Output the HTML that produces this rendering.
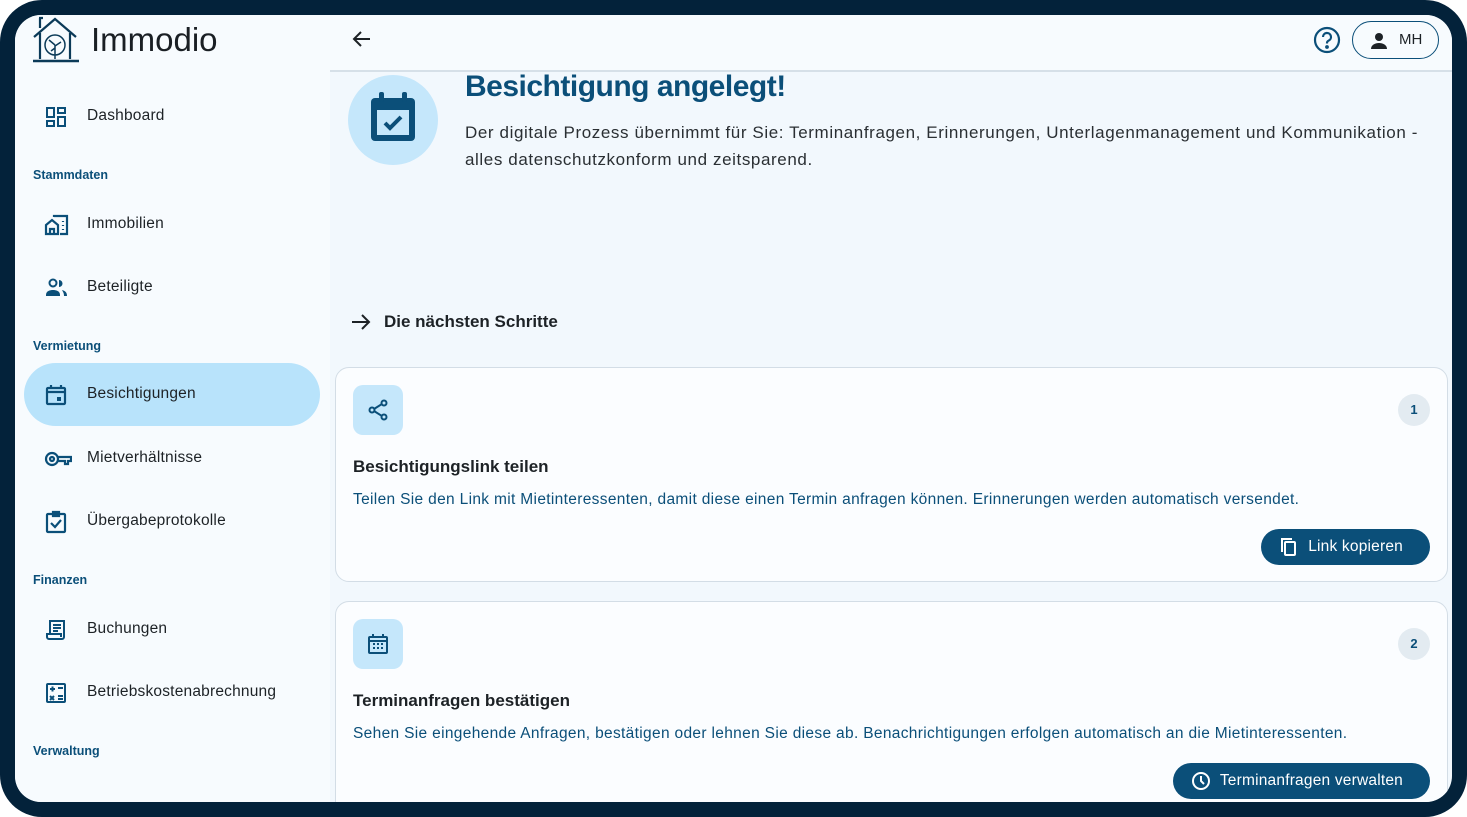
<!DOCTYPE html>
<html><head><meta charset="utf-8"><style>
*{box-sizing:border-box;margin:0;padding:0}
html,body{width:1467px;height:817px;overflow:hidden;background:#fff;font-family:"Liberation Sans",sans-serif}
.frame{position:absolute;left:0;top:0;width:1467px;height:817px;background:#03223a;border-radius:42px}
.screen{position:absolute;left:15px;top:15px;width:1437px;height:787px;border-radius:26px;overflow:hidden;background:#f2f8fd}
.side{position:absolute;left:0;top:0;width:315px;height:787px;background:#f7fbfe}
.logo{position:absolute;left:17px;top:0}
.brand{position:absolute;left:76px;top:6px;font-size:33px;color:#1a1f24}
.item{position:absolute;left:9px;width:296px;height:63px;border-radius:32px;display:flex;align-items:center;font-size:15.5px;color:#1d2226;letter-spacing:0.2px}
.item svg{position:absolute;left:20px}
.item span{position:absolute;left:63px;top:22px}
.item.act{background:#b8e3fb}
.sec{position:absolute;left:18px;font-size:12.5px;font-weight:bold;color:#0b4f79}
.top{position:absolute;left:315px;top:0;width:1122px;height:57px;background:#f7fbfe;border-bottom:2px solid #d6e0e8}
.pill{position:absolute;left:1337px;top:6px;width:87px;height:38px;border:1.5px solid #0b4f79;border-radius:19px;font-size:15px;color:#1d2226}
.circle{position:absolute;left:333px;top:60px;width:90px;height:90px;border-radius:50%;background:#c5e7fb}
h1{position:absolute;left:450px;top:55px;font-size:30px;color:#0b4f79;font-weight:bold;letter-spacing:-0.5px}
.lead{position:absolute;left:450px;top:104px;width:965px;font-size:17px;line-height:27px;color:#2a2f33;letter-spacing:0.6px}
.steps{position:absolute;left:369px;top:297px;font-size:17px;font-weight:bold;color:#1d2226}
.card{position:absolute;left:320px;width:1113px;border:1.5px solid #d3dde6;border-radius:14px;background:#fbfdff}
.ic{position:absolute;left:17px;top:17px;width:50px;height:50px;border-radius:10px;background:#c5e7fb;display:flex;align-items:center;justify-content:center}
.num{position:absolute;right:17px;top:26px;width:32px;height:32px;border-radius:50%;background:#e3ebf1;font-size:13px;font-weight:bold;color:#0b4f79;text-align:center;line-height:32px}
.ct{position:absolute;left:17px;top:89px;font-size:17px;font-weight:bold;color:#1d2226}
.cd{position:absolute;left:17px;top:123px;font-size:15.5px;color:#0b4f79;letter-spacing:0.33px}
.btn{position:absolute;right:17px;height:36px;border-radius:18px;background:#0b4f79;color:#fff;font-size:15.5px;display:flex;align-items:center;padding:0 27px 0 18px;gap:9px;letter-spacing:0.2px}
</style></head><body>
<div class="frame"></div>
<div class="screen">
<div class="side">
<svg class="logo" width="48" height="48" viewBox="0 0 48 48" fill="none" stroke="#0b3a58" stroke-width="2.2"><path d="M2 22 L23 4 L44 22"/><path d="M8 3v10"/><path d="M7 3h4"/><path d="M8 18v26M38 18v26"/><path d="M1 46h46" stroke-width="2.5"/><circle cx="23" cy="30" r="10" stroke-width="1.5"/><path d="M23 44V30M23 30l-6-5M23 31l6-4M19 36l4-3" stroke-width="1.5"/></svg>
<div class="brand">Immodio</div>
<div class="item" style="top:70px"><svg width="24" height="24" viewBox="0 0 24 24" fill="none" stroke="#0b4f79" stroke-width="2"><rect x="3" y="3" width="7" height="9"/><rect x="14" y="3" width="7" height="5"/><rect x="14" y="12" width="7" height="9"/><rect x="3" y="16" width="7" height="5"/></svg><span>Dashboard</span></div>
<div class="sec" style="top:153px">Stammdaten</div>
<div class="item" style="top:178px"><svg width="26" height="24" viewBox="0 0 26 24" fill="none" stroke="#0b4f79" stroke-width="2.2"><path d="M2 21V12l6-5 6 5v9H2z"/><path d="M6 21v-5h4v5"/><path d="M10 4V3h13v18h-7"/><path d="M19 8v1M19 12v1M19 16v1"/></svg><span>Immobilien</span></div>
<div class="item" style="top:241px"><svg width="26" height="24" viewBox="0 0 26 24" fill="#0b4f79"><circle cx="9" cy="7" r="3.5" fill="none" stroke="#0b4f79" stroke-width="2"/><path d="M2 19c0-4 4-5 7-5s7 1 7 5v1H2z"/><path d="M15 4a3.5 3.5 0 0 1 0 7zM18 14c3 1 5 2 5 6h-3c0-3-1-4-2-6z"/></svg><span>Beteiligte</span></div>
<div class="sec" style="top:324px">Vermietung</div>
<div class="item act" style="top:348px"><svg width="24" height="24" viewBox="0 0 24 24" fill="none" stroke="#0b4f79" stroke-width="2.2"><rect x="3" y="5" width="18" height="16" rx="1"/><path d="M3 9h18M7 2v4M17 2v4" /><rect x="13" y="14" width="4" height="4" fill="#0b4f79" stroke="none"/></svg><span>Besichtigungen</span></div>
<div class="item" style="top:412px"><svg width="28" height="24" viewBox="0 0 28 24" fill="none" stroke="#0b4f79" stroke-width="2.2"><circle cx="8" cy="12" r="6"/><circle cx="8" cy="12" r="2"/><path d="M14 10h13v4h-3v3h-3v-3h-7"/></svg><span>Mietverhältnisse</span></div>
<div class="item" style="top:475px"><svg width="24" height="24" viewBox="0 0 24 24" fill="none" stroke="#0b4f79" stroke-width="2.2"><rect x="3" y="4" width="18" height="18" rx="1"/><path d="M9 2h6v4H9z"/><path d="M7 13l4 4 6-7"/></svg><span>Übergabeprotokolle</span></div>
<div class="sec" style="top:558px">Finanzen</div>
<div class="item" style="top:583px"><svg width="24" height="24" viewBox="0 0 24 24" fill="none" stroke="#0b4f79" stroke-width="2"><path d="M6 3h14v16a2 2 0 0 1-2 2H5a2 2 0 0 1-2-2v-3h3z"/><path d="M6 16h11v3M9 7h8M9 10h8M9 13h5"/></svg><span>Buchungen</span></div>
<div class="item" style="top:646px"><svg width="24" height="24" viewBox="0 0 24 24" fill="none" stroke="#0b4f79" stroke-width="2"><rect x="3" y="3" width="18" height="18" rx="1"/><path d="M6 8h5M8.5 5.5v5M14 7h5M14 15h5M14 18h5M6 15l4 4M10 15l-4 4"/></svg><span>Betriebskostenabrechnung</span></div>
<div class="sec" style="top:729px">Verwaltung</div>
</div>
<div class="top">
<svg style="position:absolute;left:20px;top:12px" width="24" height="24" viewBox="0 0 24 24" fill="none" stroke="#1d2226" stroke-width="2"><path d="M20 12H5M11 5l-7 7 7 7"/></svg>
<svg style="position:absolute;left:983px;top:11px" width="28" height="28" viewBox="0 0 28 28" fill="none" stroke="#0b4f79" stroke-width="2.2"><circle cx="14" cy="14" r="12"/><path d="M10 11a4 4 0 1 1 5.5 3.7c-1 .5-1.5 1.2-1.5 2.3v.5"/><circle cx="14" cy="21" r="0.8" fill="#0b4f79"/></svg>
</div>
<div class="pill"><svg style="position:absolute;left:16px;top:9px" width="20" height="20" viewBox="0 0 20 20" fill="#1d2226"><circle cx="10" cy="6" r="4"/><path d="M2 18c0-4 4-6 8-6s8 2 8 6z"/></svg><span style="position:absolute;left:46px;top:9px">MH</span></div>
<div class="circle"><svg style="position:absolute;left:21px;top:16px" width="48" height="54" viewBox="0 0 48 54"><rect x="2" y="7" width="44" height="43" rx="4" fill="#0b4f79"/><rect x="8" y="19" width="32" height="25" fill="#c5e7fb"/><rect x="10" y="1" width="5" height="10" rx="2" fill="#0b4f79"/><rect x="33" y="1" width="5" height="10" rx="2" fill="#0b4f79"/><path d="M16 32l5 5 11-11" stroke="#0b4f79" stroke-width="4" fill="none"/></svg></div>
<h1>Besichtigung angelegt!</h1>
<div class="lead">Der digitale Prozess übernimmt für Sie: Terminanfragen, Erinnerungen, Unterlagenmanagement und Kommunikation -<br>alles datenschutzkonform und zeitsparend.</div>
<svg style="position:absolute;left:334px;top:295px" width="24" height="24" viewBox="0 0 24 24" fill="none" stroke="#1d2226" stroke-width="2"><path d="M3 12h17M13 5l7 7-7 7"/></svg>
<div class="steps">Die nächsten Schritte</div>
<div class="card" style="top:352px;height:215px">
<div class="ic"><svg width="24" height="24" viewBox="0 0 24 24" fill="none" stroke="#0b4f79" stroke-width="2"><circle cx="18" cy="5" r="2.5"/><circle cx="6" cy="12" r="2.5"/><circle cx="18" cy="19" r="2.5"/><path d="M8 11l8-5M8 13l8 5"/></svg></div>
<div class="num">1</div>
<div class="ct">Besichtigungslink teilen</div>
<div class="cd">Teilen Sie den Link mit Mietinteressenten, damit diese einen Termin anfragen können. Erinnerungen werden automatisch versendet.</div>
<div class="btn" style="top:161px"><svg width="20" height="20" viewBox="0 0 20 20" fill="none" stroke="#fff" stroke-width="2"><path d="M3 15V2h10"/><rect x="6" y="5" width="10" height="13" rx="1"/></svg>Link kopieren</div>
</div>
<div class="card" style="top:586px;height:230px">
<div class="ic"><svg width="24" height="24" viewBox="0 0 24 24" fill="none" stroke="#0b4f79" stroke-width="2"><rect x="3" y="5" width="18" height="16" rx="1"/><path d="M3 9h18M7 2v4M17 2v4"/><path d="M7 12h2M11 12h2M15 12h2M7 16h2M11 16h2M15 16h2"/></svg></div>
<div class="num">2</div>
<div class="ct">Terminanfragen bestätigen</div>
<div class="cd">Sehen Sie eingehende Anfragen, bestätigen oder lehnen Sie diese ab. Benachrichtigungen erfolgen automatisch an die Mietinteressenten.</div>
<div class="btn" style="top:161px"><svg width="20" height="20" viewBox="0 0 20 20" fill="none" stroke="#fff" stroke-width="2"><circle cx="10" cy="10" r="8"/><path d="M10 5v5l3 3"/></svg>Terminanfragen verwalten</div>
</div>
</div>
</body></html>
